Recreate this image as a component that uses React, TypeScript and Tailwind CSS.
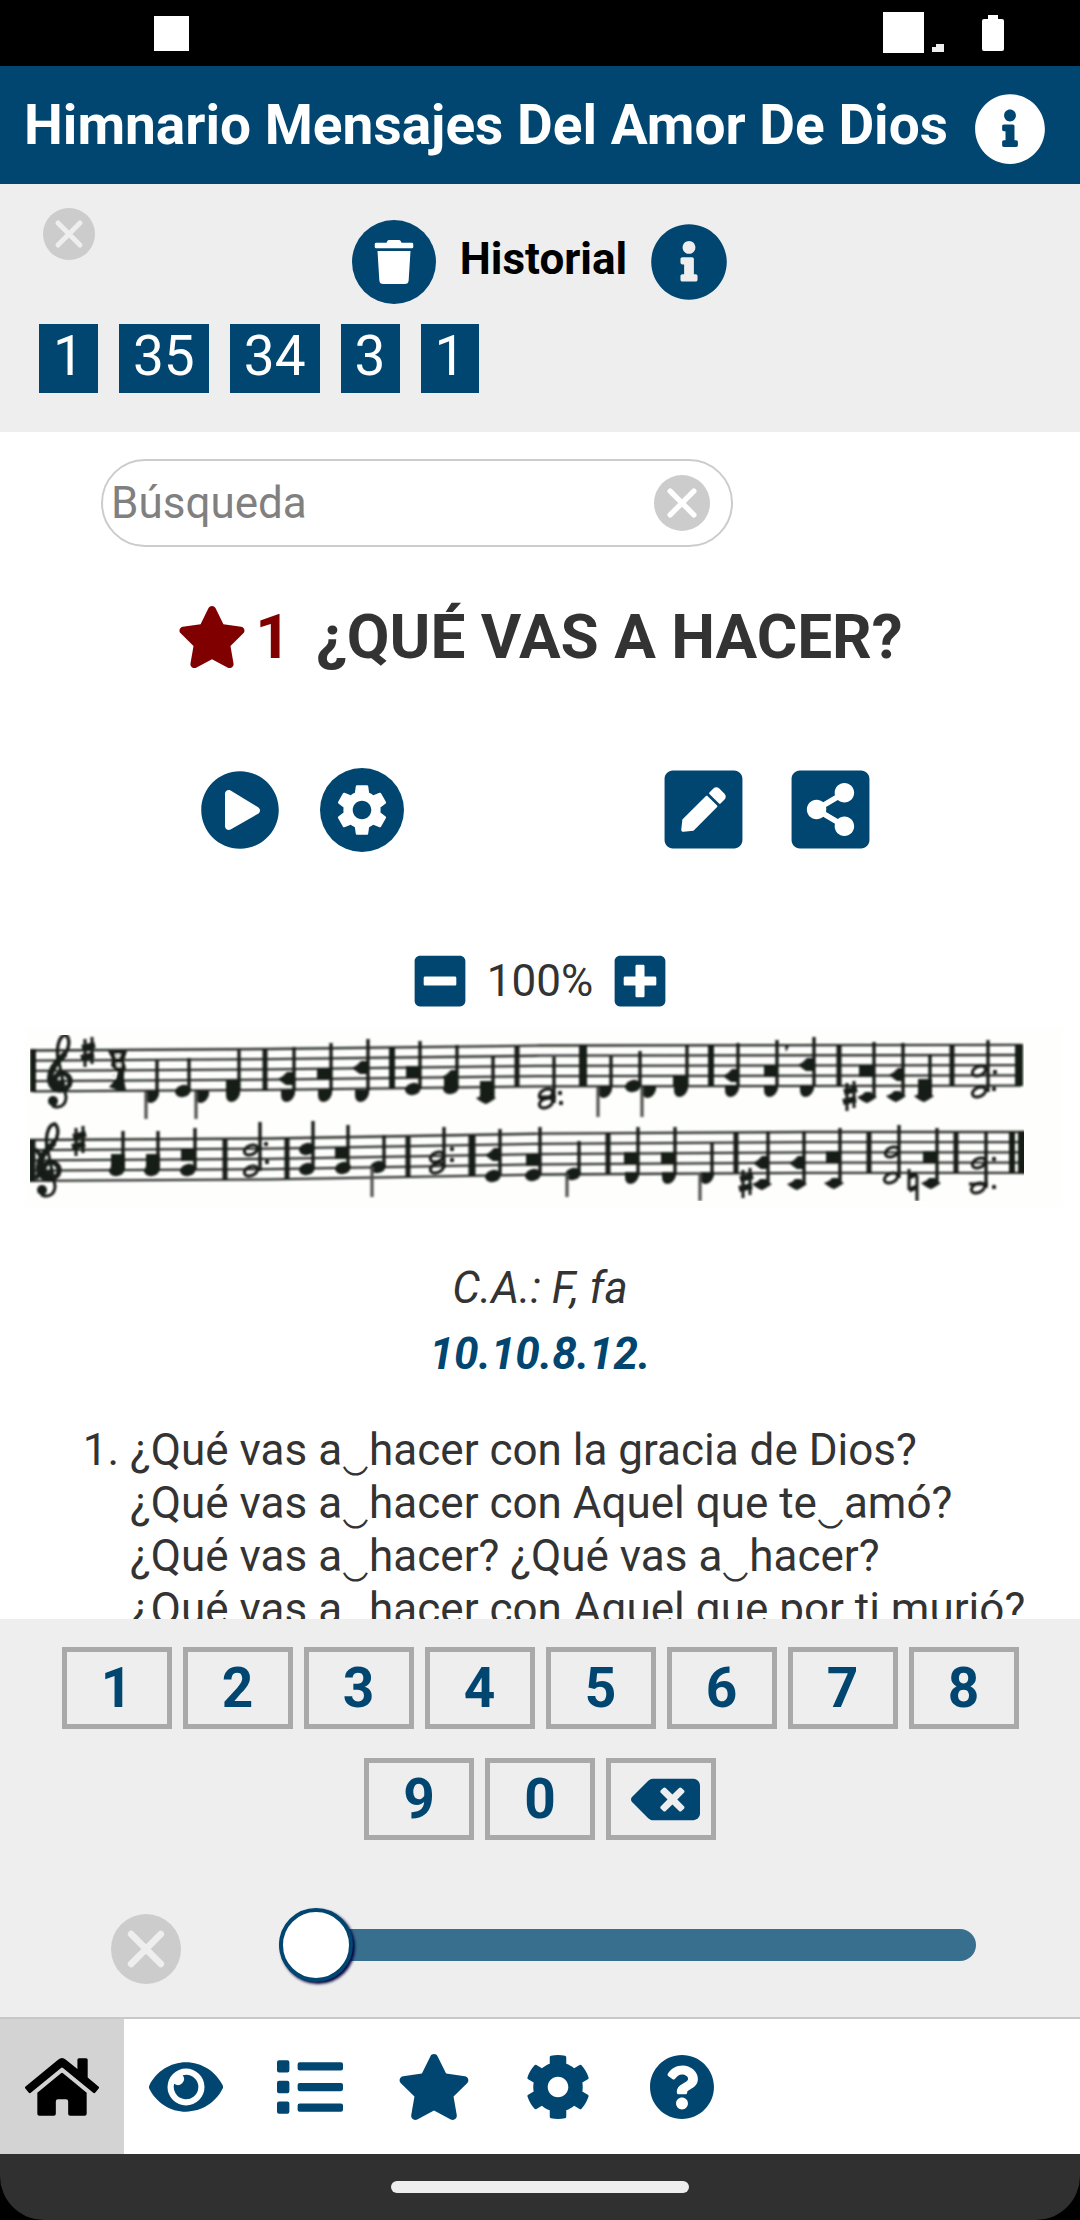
import { useState } from "react";
import type { ReactNode } from "react";
import {
  FaBackspace,
  FaCog,
  FaEye,
  FaHome,
  FaInfoCircle,
  FaList,
  FaMinusSquare,
  FaPenSquare,
  FaPlayCircle,
  FaPlusSquare,
  FaQuestionCircle,
  FaShareAltSquare,
  FaStar,
  FaTrash,
} from "react-icons/fa";
import { MdSettings } from "react-icons/md";

function CloseIcon({ className, cross = "#fff" }: { className: string; cross?: string }) {
  return (
    <svg viewBox="0 0 52 52" className={className} aria-hidden="true">
      <circle cx="26" cy="26" r="26" fill="#cccccc" />
      <path d="M15 15L37 37M37 15L15 37" stroke={cross} strokeWidth="5" strokeLinecap="round" />
    </svg>
  );
}

function StatusBar() {
  return (
    <div className="flex h-[66px] shrink-0 items-start justify-between bg-black pl-[154px] pr-[76px]">
      <div className="mt-4 h-[35px] w-[35px] bg-white" />
      <div className="flex items-start">
        <div className="mt-3 h-[41px] w-[41px] bg-white" />
        <svg viewBox="0 0 12 8" className="ml-2 mt-[44px] h-2 w-3" aria-hidden="true">
          <path d="M0 8V3h4V0h8v8z" fill="#eee" />
        </svg>
        <svg viewBox="0 0 22 36" className="ml-[38px] mt-[15px] h-9 w-[22px]" aria-hidden="true">
          <path d="M6 0h10v4h4q2 0 2 2v28q0 2-2 2H2q-2 0-2-2V6q0-2 2-2h4z" fill="#fff" />
        </svg>
      </div>
    </div>
  );
}

/* ---------- Score ---------- */

type Kind = "oval" | "diamond" | "square" | "bowl" | "open" | "ledger";

interface Note {
  heads: [number, number, Kind][];
  up?: [number, number];
  down?: [number, number];
  dots?: [number, number][];
}

const INK = "#191a17";

const notes: Note[] = [
  { heads: [[152, 1093, "bowl"]], up: [157, 1061], down: [146, 1120] },
  { heads: [[183, 1092, "oval"]], up: [189, 1059] },
  { heads: [[202, 1093, "bowl"]], down: [196, 1120] },
  { heads: [[233, 1087, "square"], [233, 1092, "bowl"]], up: [239, 1051] },
  { heads: [[287, 1080, "diamond"], [288, 1092, "bowl"]], up: [294, 1048] },
  { heads: [[324, 1075, "square"], [325, 1092, "bowl"]], up: [331, 1044] },
  { heads: [[361, 1069, "diamond"], [362, 1092, "bowl"]], up: [368, 1040] },
  { heads: [[413, 1073, "square"], [413, 1090, "oval"]], up: [420, 1042] },
  { heads: [[451, 1078, "diamond"], [451, 1084, "square"], [451, 1089, "oval"]], up: [457, 1046] },
  { heads: [[487, 1088, "square"], [487, 1093, "square"], [486, 1099, "ledger"]], up: [493, 1057] },
  { heads: [[546, 1095, "open"], [546, 1104, "open"]], up: [554, 1058], dots: [[560, 1094], [561, 1104]] },
  { heads: [[605, 1088, "bowl"]], up: [611, 1057], down: [598, 1118] },
  { heads: [[633, 1087, "oval"]], up: [640, 1052] },
  { heads: [[649, 1088, "bowl"]], down: [642, 1118] },
  { heads: [[680, 1082, "square"], [681, 1087, "bowl"]], up: [687, 1046] },
  { heads: [[732, 1077, "diamond"], [732, 1087, "bowl"]], up: [738, 1044] },
  { heads: [[771, 1072, "square"], [771, 1087, "bowl"]], up: [777, 1041] },
  { heads: [[807, 1066, "diamond"], [807, 1087, "bowl"]], up: [814, 1038] },
  { heads: [[866, 1072, "square"], [867, 1098, "ledger"]], up: [874, 1043] },
  { heads: [[898, 1076, "diamond"], [896, 1097, "ledger"]], up: [903, 1044] },
  { heads: [[925, 1086, "square"], [925, 1091, "square"], [924, 1097, "ledger"]], up: [930, 1055] },
  { heads: [[979, 1072, "open"], [979, 1093, "open"]], up: [988, 1041], dots: [[995, 1073], [994, 1090]] },

  { heads: [[118, 1161, "square"], [118, 1166, "square"], [117, 1171, "oval"]], up: [123, 1132] },
  { heads: [[153, 1161, "square"], [153, 1166, "square"], [152, 1171, "oval"]], up: [158, 1132] },
  { heads: [[188, 1156, "square"], [188, 1171, "oval"]], up: [195, 1129] },
  { heads: [[251, 1151, "open"], [251, 1172, "open"]], up: [260, 1123], dots: [[266, 1145], [267, 1163]] },
  { heads: [[307, 1150, "oval"], [307, 1170, "oval"]], up: [313, 1122] },
  { heads: [[342, 1154, "square"], [343, 1169, "oval"]], up: [348, 1126] },
  { heads: [[378, 1168, "oval"]], up: [384, 1136], down: [372, 1198] },
  { heads: [[437, 1158, "open"], [437, 1169, "open"]], up: [444, 1128], dots: [[452, 1150], [452, 1161]] },
  { heads: [[494, 1156, "diamond"], [493, 1177, "oval"]], up: [500, 1130] },
  { heads: [[533, 1161, "square"], [533, 1176, "oval"]], up: [540, 1128] },
  { heads: [[573, 1175, "oval"]], up: [579, 1142], down: [567, 1198] },
  { heads: [[631, 1159, "square"], [632, 1174, "bowl"]], up: [638, 1128] },
  { heads: [[668, 1159, "square"], [669, 1174, "bowl"]], up: [675, 1128] },
  { heads: [[707, 1174, "bowl"]], up: [712, 1143], down: [700, 1202] },
  { heads: [[762, 1164, "diamond"], [762, 1185, "ledger"]], up: [768, 1132] },
  { heads: [[798, 1164, "diamond"], [797, 1185, "ledger"]], up: [804, 1132] },
  { heads: [[833, 1158, "square"], [834, 1184, "ledger"]], up: [840, 1129] },
  { heads: [[892, 1153, "open"], [891, 1179, "open"]], up: [899, 1126] },
  { heads: [[930, 1158, "square"], [931, 1184, "ledger"]], up: [937, 1129] },
  { heads: [[979, 1164, "open"], [978, 1189, "open"]], up: [986, 1132], dots: [[994, 1160], [994, 1188]] },
];

const bars: [number, number, number, number][] = [
  [33, 1050, 1093, 6], [265, 1050, 1092, 5], [392, 1048, 1090, 6], [517, 1047, 1088, 5], [583, 1046, 1087, 8],
  [711, 1046, 1087, 6], [839, 1046, 1087, 5], [952, 1046, 1087, 5], [1019, 1045, 1087, 8],
  [32, 1140, 1183, 7], [225, 1140, 1181, 5], [287, 1139, 1180, 5], [408, 1138, 1178, 5], [472, 1136, 1177, 7],
  [608, 1134, 1175, 5], [736, 1133, 1174, 5], [869, 1133, 1174, 5], [956, 1133, 1174, 5], [1012, 1133, 1174, 6],
  [1022, 1132, 1175, 8],
];

function Head({ x, y, kind }: { x: number; y: number; kind: Kind }) {
  switch (kind) {
    case "square":
      return <rect x={x - 7} y={y - 6} width="14" height="12" fill={INK} />;
    case "diamond":
      return <path d={`M${x - 9} ${y}Q${x - 4} ${y - 2} ${x} ${y - 7}H${x + 6}V${y + 6}H${x - 1}Q${x - 4} ${y + 4} ${x - 9} ${y}z`} fill={INK} />;
    case "bowl":
      return <path d={`M${x - 7} ${y - 1}H${x + 7}V${y + 3}Q${x + 4} ${y + 11} ${x - 2} ${y + 11}Q${x - 7} ${y + 10} ${x - 7} ${y + 4}z`} fill={INK} />;
    case "open":
      return <ellipse cx={x} cy={y} rx="7" ry="4.5" fill="none" stroke={INK} strokeWidth="3" transform={`rotate(-24 ${x} ${y})`} />;
    case "ledger":
      return (
        <path
          d={`M${x - 10} ${y}Q${x - 4} ${y - 2} ${x - 2} ${y - 5}H${x + 4}Q${x + 6} ${y - 1} ${x + 10} ${y}Q${x + 3} ${y + 5} ${x} ${y + 6}Q${x - 4} ${y + 5} ${x - 10} ${y}z`}
          fill={INK}
        />
      );
    default:
      return <ellipse cx={x} cy={y} rx="8" ry="6" fill={INK} transform={`rotate(-14 ${x} ${y})`} />;
  }
}

function Sharp({ x, y }: { x: number; y: number }) {
  return (
    <g stroke={INK}>
      <path d={`M${x - 3} ${y - 13}V${y + 15}M${x + 4} ${y - 15}V${y + 12}`} strokeWidth="3" />
      <path d={`M${x - 6} ${y - 4}L${x + 7} ${y - 7}M${x - 7} ${y + 6}L${x + 6} ${y + 3}`} strokeWidth="6" />
    </g>
  );
}

function Clef({ dx, dy }: { dx: number; dy: number }) {
  return (
    <g transform={`translate(${dx} ${dy})`} fill="none" stroke={INK} strokeLinecap="round">
      <path d="M58 1060C56 1046 60 1036 66 1036C71 1041 69 1051 63 1057" strokeWidth="3.4" />
      <path d="M64 1056C55 1064 50 1071 50 1079C50 1089 57 1092 64 1090" strokeWidth="6" />
      <path d="M64 1090C71 1088 72 1080 67 1076C61 1072 54 1076 55 1082C56 1086 60 1087 62 1084" strokeWidth="5" />
      <path d="M58 1058L66 1098C66 1106 60 1110 53 1107" strokeWidth="3" />
      <circle cx="53" cy="1102" r="5" fill={INK} stroke="none" />
    </g>
  );
}

function Score() {
  const staffLines = [0, 1, 2, 3, 4];
  return (
    <svg viewBox="0 1028 1080 190" className="block w-full" role="img" aria-label="Partitura">
      <defs>
        <filter id="ink" x="0" y="0" width="100%" height="100%">
          <feGaussianBlur stdDeviation="0.8" />
        </filter>
      </defs>
      <rect x="25" y="1028" width="1038" height="180" fill="#fefefd" />
      <g filter="url(#ink)">
        <g fill="none" stroke="#2c2d2a" strokeWidth="2.3">
          {staffLines.map((i) => (
            <path key={`a${i}`} d={`M33 ${1051.5 + i * 10.2}L270 ${1050 + i * 10.2}L540 ${1046.5 + i * 10.2}L1021 ${1045.8 + i * 10.2}`} />
          ))}
          {staffLines.map((i) => (
            <path key={`b${i}`} d={`M30 ${1141 + i * 10.2}L270 ${1139.5 + i * 10.2}L540 ${1134.7 + i * 10.2}L810 ${1133 + i * 10.2}L1024 ${1133 + i * 10.2}`} />
          ))}
        </g>
        {bars.map(([x, y1, y2, w]) => (
          <path key={`${x}-${y1}`} d={`M${x} ${y1}V${y2}`} stroke={INK} strokeWidth={w} />
        ))}
        <Clef dx={0} dy={0} />
        <Clef dx={-11} dy={89} />
        <path d="M35 1150Q44 1158 42 1168L36 1180" stroke={INK} strokeWidth="4" fill="none" />
        <Sharp x={88} y={1053} />
        <Sharp x={79} y={1142} />
        <Sharp x={850} y={1097} />
        <Sharp x={746} y={1184} />
        <path d="M108 1052H127L124 1062L126 1069Q122 1074 126 1091H117L109 1088L116 1080L118 1073L111 1067L112 1060z" fill={INK} />
        <path d="M115 1055H121L119 1059H116zM116 1064H121V1068H117zM111 1077L115 1074V1079z" fill="#e8e8e4" />
        <path d="M909 1170V1191M917 1176V1202" stroke={INK} strokeWidth="3" fill="none" />
        <path d="M909 1178L917 1175M909 1191L917 1188" stroke={INK} strokeWidth="5" />
        <path d="M969 1185H988" stroke={INK} strokeWidth="3" />
        <path d="M538 1098H556" stroke={INK} strokeWidth="3" />
        <path d="M785 1047H789L786 1053z" fill={INK} />
        {notes.map((n, i) => (
          <g key={i}>
            {n.heads.map(([x, y, kind], j) => (
              <Head key={j} x={x} y={y} kind={kind} />
            ))}
            {n.up && <path d={`M${n.up[0]} ${n.up[1]}V${n.heads[n.heads.length - 1][1]}`} stroke={INK} strokeWidth="3.4" />}
            {n.down && <path d={`M${n.down[0]} ${n.heads[0][1]}V${n.down[1]}`} stroke="#50514e" strokeWidth="3.2" />}
            {n.dots?.map(([x, y], j) => (
              <circle key={j} cx={x} cy={y} r="2.2" fill={INK} />
            ))}
          </g>
        ))}
      </g>
    </svg>
  );
}

/* ---------- Page ---------- */

const historyItems = ["1", "35", "34", "3", "1"];

const verse = [
  "¿Qué vas a‿hacer con la gracia de Dios?",
  "¿Qué vas a‿hacer con Aquel que te‿amó?",
  "¿Qué vas a‿hacer? ¿Qué vas a‿hacer?",
  "¿Qué vas a‿hacer con Aquel que por ti murió?",
];

function Key({ children, label, onClick }: { children: ReactNode; label: string; onClick?: () => void }) {
  return (
    <button
      type="button"
      aria-label={label}
      onClick={onClick}
      className="flex h-[82px] w-[110px] items-center justify-center border-[5px] border-[#a9a9a9] text-[55px] font-bold leading-none text-[#004670]"
    >
      {children}
    </button>
  );
}

const tabs = [
  { label: "Inicio", Icon: FaHome, size: 74 },
  { label: "Ver", Icon: FaEye, size: 74 },
  { label: "Lista", Icon: FaList, size: 66 },
  { label: "Favoritos", Icon: FaStar, size: 74 },
  { label: "Ajustes", Icon: FaCog, size: 66 },
  { label: "Ayuda", Icon: FaQuestionCircle, size: 66 },
];

export default function App() {
  const [volume, setVolume] = useState(0);
  const [query, setQuery] = useState("");
  const [active, setActive] = useState("Inicio");

  return (
    <div className="flex h-screen w-full flex-col overflow-hidden bg-white font-['Roboto',sans-serif] text-[44px] text-[#333333]">
      <StatusBar />

      <header className="flex h-[118px] shrink-0 items-center justify-between bg-[#004670] pl-6 pr-[34px] text-white">
        <h1 className="whitespace-nowrap text-[55px] font-bold leading-none">Himnario Mensajes Del Amor De Dios</h1>
        <button type="button" aria-label="Información" className="mt-2">
          <FaInfoCircle size={72} />
        </button>
      </header>

      <section className="shrink-0 bg-[#eeeeee] pb-[39px]">
        <div className="grid grid-cols-[1fr_auto_1fr] pt-6">
          <button type="button" aria-label="Cerrar historial" className="ml-[43px] h-[52px] w-[52px]">
            <CloseIcon className="h-[52px] w-[52px]" cross="#eeeeee" />
          </button>
          <div className="mt-3 flex items-center">
            <button type="button" aria-label="Borrar historial" className="flex h-[84px] w-[84px] items-center justify-center rounded-full bg-[#004670] text-white">
              <FaTrash size={44} />
            </button>
            <h2 className="ml-6 mr-[23px] pb-1.5 font-bold leading-none text-black">Historial</h2>
            <button type="button" aria-label="Ayuda del historial" className="text-[#004670]">
              <FaInfoCircle size={78} />
            </button>
          </div>
        </div>
        <div className="mt-5 flex gap-[21px] pl-[39px]">
          {historyItems.map((n, i) => (
            <button key={i} type="button" className="h-[69px] bg-[#004670] px-[14px] pb-1 text-[55px] leading-none text-white">
              {n}
            </button>
          ))}
        </div>
      </section>

      <main className="min-h-0 flex-1 overflow-hidden">
        <div className="ml-[101px] mt-[27px] flex h-[88px] w-[632px] items-center justify-between rounded-full border-2 border-[#cccccc] pl-2 pr-[21px]">
          <input
            type="text"
            aria-label="Búsqueda"
            placeholder="Búsqueda"
            value={query}
            onChange={(e) => setQuery(e.target.value)}
            className="min-w-0 flex-1 leading-none outline-none placeholder:text-[#808080]"
          />
          <button type="button" aria-label="Borrar búsqueda" onClick={() => setQuery("")}>
            <CloseIcon className="h-14 w-14" />
          </button>
        </div>

        <div className="mt-[52px] flex h-[76px] items-center justify-center">
          <FaStar size={70} color="#800000" />
          <span className="ml-2 text-[62px] font-bold leading-none text-[#800000]">1</span>
          <h2 className="ml-[25px] whitespace-nowrap text-[62px] font-bold leading-none">¿QUÉ VAS A HACER?</h2>
        </div>

        <div className="mt-[90px] flex items-center justify-between pl-[200px] pr-[205px] text-[#004670]">
          <div className="flex items-center gap-10">
            <button type="button" aria-label="Reproducir">
              <FaPlayCircle size={80} />
            </button>
            <button type="button" aria-label="Ajustes de audio" className="flex h-[84px] w-[84px] items-center justify-center rounded-full bg-[#004670] text-white">
              <MdSettings size={62} />
            </button>
          </div>
          <div className="flex items-center gap-[38px]">
            <button type="button" aria-label="Editar">
              <FaPenSquare size={89} />
            </button>
            <button type="button" aria-label="Compartir">
              <FaShareAltSquare size={89} />
            </button>
          </div>
        </div>

        <div className="mt-[97px] flex h-[60px] items-center justify-center text-[#004670]">
          <button type="button" aria-label="Reducir">
            <FaMinusSquare size={58} />
          </button>
          <span className="mx-[18px] leading-none text-[#333333]">100%</span>
          <button type="button" aria-label="Ampliar">
            <FaPlusSquare size={58} />
          </button>
        </div>

        <div className="mt-4">
          <Score />
        </div>

        <p className="mt-[38px] text-center italic leading-[66px]">C.A.: F, fa</p>
        <p className="text-center leading-[66px]">
          <a href="#metro" className="font-bold italic text-[#004670]">
            10.10.8.12.
          </a>
        </p>

        <div className="mt-[37px] flex leading-[53px]">
          <span className="w-[130px] shrink-0 pr-[11px] text-right">1.</span>
          <p className="whitespace-nowrap">
            {verse.map((line) => (
              <span key={line} className="block">
                {line}
              </span>
            ))}
          </p>
        </div>
      </main>

      <section className="shrink-0 bg-[#eeeeee] pb-4 pt-7">
        <div className="flex flex-wrap justify-center gap-x-[11px] gap-y-[29px] px-[50px]">
          {["1", "2", "3", "4", "5", "6", "7", "8", "9", "0"].map((d) => (
            <Key key={d} label={d} onClick={() => setQuery(query + d)}>
              {d}
            </Key>
          ))}
          <Key label="Borrar" onClick={() => setQuery(query.slice(0, -1))}>
            <FaBackspace size={69} className="ml-2" />
          </Key>
        </div>
        <div className="mt-[49px] flex h-[112px] items-center pl-[111px] pr-[104px]">
          <button type="button" aria-label="Cerrar teclado" className="mt-2 shrink-0">
            <CloseIcon className="h-[70px] w-[70px]" cross="#eeeeee" />
          </button>
          <input
            type="range"
            aria-label="Posición"
            min={0}
            max={100}
            value={volume}
            onChange={(e) => setVolume(Number(e.target.value))}
            className="ml-[98px] h-[74px] min-w-0 flex-1 appearance-none bg-transparent [&::-webkit-slider-runnable-track]:h-8 [&::-webkit-slider-runnable-track]:rounded-full [&::-webkit-slider-runnable-track]:bg-[#396f8e] [&::-webkit-slider-thumb]:-mt-[21px] [&::-webkit-slider-thumb]:h-[74px] [&::-webkit-slider-thumb]:w-[74px] [&::-webkit-slider-thumb]:appearance-none [&::-webkit-slider-thumb]:rounded-full [&::-webkit-slider-thumb]:border-4 [&::-webkit-slider-thumb]:border-[#004670] [&::-webkit-slider-thumb]:bg-white [&::-webkit-slider-thumb]:shadow-[2px_2px_3px_#000040]"
          />
        </div>
      </section>

      <nav className="flex h-[137px] shrink-0 border-t-2 border-[#c8c8c8] bg-white">
        {tabs.map(({ label, Icon, size }) => (
          <button
            key={label}
            type="button"
            aria-label={label}
            onClick={() => setActive(label)}
            className={
              active === label
                ? "flex w-[124px] items-center justify-center bg-[#d3d3d3] text-black"
                : "flex w-[124px] items-center justify-center text-[#004670]"
            }
          >
            <Icon size={size} />
          </button>
        ))}
      </nav>

      <footer className="shrink-0 bg-black">
        <div className="flex h-[66px] items-center justify-center rounded-b-[44px] bg-[#303030]">
          <div className="h-3 w-[298px] rounded-full bg-[#eeeeee]" />
        </div>
      </footer>
    </div>
  );
}
